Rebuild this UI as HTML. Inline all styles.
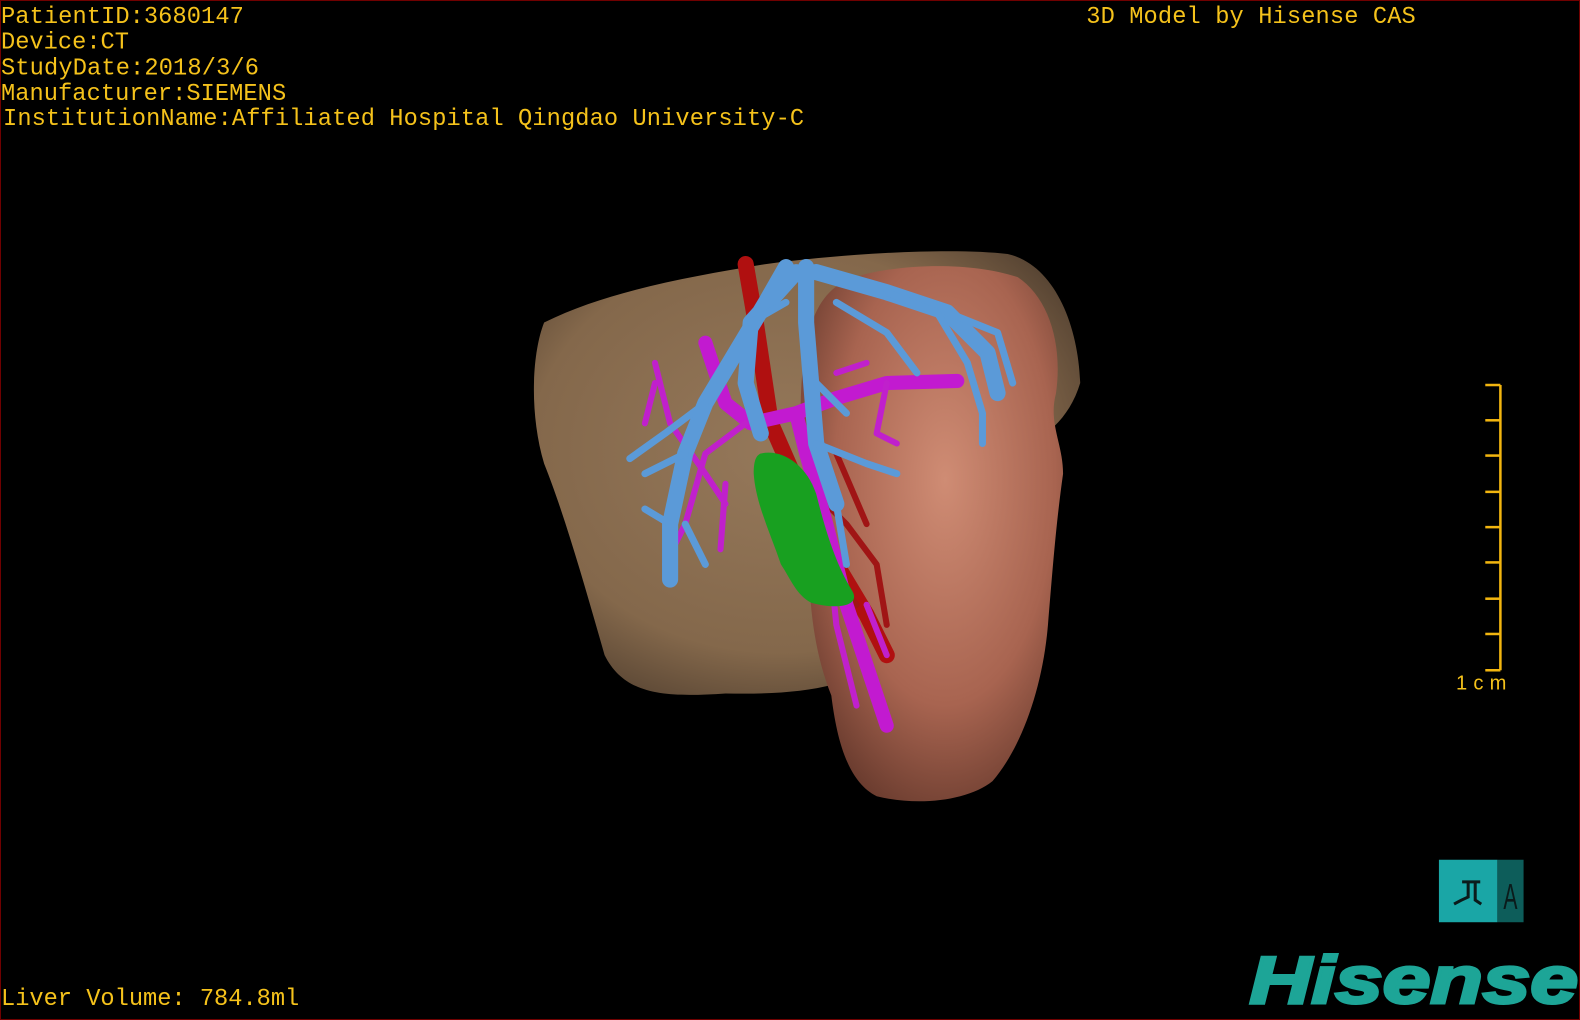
<!DOCTYPE html>
<html><head><meta charset="utf-8"><style>
html,body{margin:0;padding:0;background:#000;overflow:hidden}
svg{display:block}
</style></head><body>
<svg width="1580" height="1020" viewBox="0 0 1568 1012" preserveAspectRatio="none" xmlns="http://www.w3.org/2000/svg">
<defs>
<radialGradient id="tan" cx="0.45" cy="0.45" r="0.65"><stop offset="0" stop-color="#95785a"/><stop offset="0.7" stop-color="#84684b"/><stop offset="1" stop-color="#524030"/></radialGradient>
<radialGradient id="sal" cx="0.55" cy="0.4" r="0.7"><stop offset="0" stop-color="#cf8c74"/><stop offset="0.6" stop-color="#a86450"/><stop offset="1" stop-color="#5e3428"/></radialGradient>
</defs>
<rect x="0" y="0" width="1568" height="1012" fill="#000" stroke="#700000" stroke-width="2"/>
<path d="M540,320 C600,290 680,275 760,262 C850,250 950,246 1000,252 C1045,262 1070,320 1072,380 C1060,420 1030,440 1000,450 L900,640 C860,680 800,690 720,688 C660,692 620,690 600,650 C580,580 560,510 540,460 C525,410 528,350 540,320 Z" fill="url(#tan)"/>
<path d="M840,278 C880,262 960,258 1010,275 C1040,295 1055,340 1048,390 C1040,420 1055,440 1055,470 C1048,520 1045,560 1040,620 C1035,680 1015,740 985,775 C960,795 910,800 870,790 C840,775 830,730 825,690 C805,640 800,580 805,520 C795,460 790,400 800,340 C808,305 820,288 840,278 Z" fill="url(#sal)"/>
<g fill="none" stroke-linecap="round" stroke-linejoin="round">
<path d="M740,262 L750,320 L765,420 L800,500 L830,560 L860,610 L880,650" stroke="#b01010" stroke-width="16"/>
<path d="M800,480 L840,520 L870,560 L880,620 M820,560 L850,600 M830,450 L860,520" stroke="#a01515" stroke-width="6"/>
<path d="M700,340 L720,400 L745,420 L790,410 L830,395 L880,380 L950,378 M790,410 L800,450 L820,520 L840,600 L860,660 L880,720" stroke="#c21ad0" stroke-width="14"/>
<path d="M650,360 L665,420 L700,470 L720,500 M740,420 L700,450 L680,520 L660,560 M720,480 L715,545 M880,380 L870,430 L890,440 M820,520 L830,620 L850,700 M860,600 L880,650 M830,370 L860,360 M650,380 L640,420" stroke="#c020cc" stroke-width="6"/>
<path d="M780,265 L760,300 L730,350 L700,400 L680,450 L665,520 L665,575 M800,265 L800,320 L805,380 L810,440 L830,500 M810,270 L880,290 L940,310 L980,350 L990,390 M790,270 L745,320 L740,380 L755,430" stroke="#5b9ad8" stroke-width="16"/>
<path d="M700,400 L660,430 L625,455 M680,450 L640,470 M665,520 L640,505 M680,520 L700,560 M880,290 L930,310 L960,360 L975,410 L975,440 M940,310 L990,330 L1005,380 M830,300 L880,330 L910,370 M810,440 L860,460 L890,470 M830,500 L840,560 M810,380 L840,410 M745,320 L780,300" stroke="#5b9ad8" stroke-width="7"/>
</g>
<path d="M755,450 C775,445 800,460 810,490 C820,530 830,560 845,585 C855,600 835,606 805,598 C790,590 785,575 775,560 C765,530 750,500 748,470 C748,458 750,452 755,450 Z" fill="#18a020"/>
<g stroke="#f2b50f" stroke-width="2.5">
<line x1="1489" y1="382" x2="1489" y2="665"/>
<line x1="1474" y1="382" x2="1489" y2="382"/><line x1="1474" y1="417" x2="1489" y2="417"/><line x1="1474" y1="452" x2="1489" y2="452"/><line x1="1474" y1="488" x2="1489" y2="488"/><line x1="1474" y1="523" x2="1489" y2="523"/><line x1="1474" y1="558" x2="1489" y2="558"/><line x1="1474" y1="594" x2="1489" y2="594"/><line x1="1474" y1="629" x2="1489" y2="629"/><line x1="1474" y1="665" x2="1489" y2="665"/>
</g>
<g font-family="Liberation Mono, monospace" fill="#f5c21b" font-size="23.5">
<text x="1" y="23" textLength="241">PatientID:3680147</text>
<text x="1" y="48" textLength="127">Device:CT</text>
<text x="1" y="74" textLength="256">StudyDate:2018/3/6</text>
<text x="1" y="99" textLength="283">Manufacturer:SIEMENS</text>
<text x="3" y="124" textLength="795">InstitutionName:Affiliated Hospital Qingdao University-C</text>
<text x="1078" y="23" textLength="327">3D Model by Hisense CAS</text>
<text x="1" y="997" textLength="296">Liver Volume: 784.8ml</text>
<text x="1445" y="684" font-family="Liberation Sans, sans-serif" font-size="20" textLength="50">1cm</text>
</g>
<rect x="1428" y="853" width="58" height="62" fill="#1aa6a6"/>
<rect x="1486" y="853" width="26" height="62" fill="#0d5d5a"/>
<path d="M1451,875 L1469,875 M1457,875 L1457,890 Q1450,893 1443,897 M1464,875 L1464,893 L1470,897" stroke="#0b1b1b" stroke-width="3" fill="none"/>
<text x="1492" y="902" font-family="Liberation Sans, sans-serif" font-size="36" fill="#0b1b1b" textLength="14" lengthAdjust="spacingAndGlyphs">A</text>
<text x="1240" y="995" font-family="Liberation Sans, sans-serif" font-weight="bold" font-style="italic" font-size="66" fill="#1da597" stroke="#1da597" stroke-width="3" textLength="326" lengthAdjust="spacingAndGlyphs">Hisense</text>
</svg>
</body></html>
